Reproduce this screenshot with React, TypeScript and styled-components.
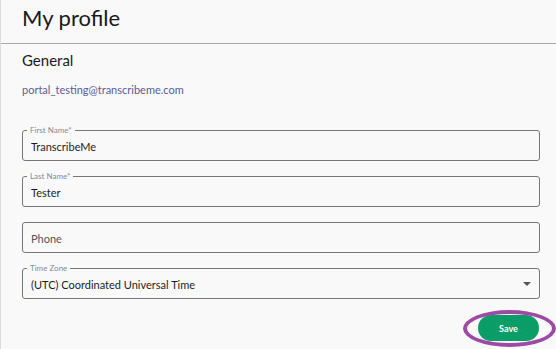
import React from "react";
import styled, { createGlobalStyle } from "styled-components";

const Global = createGlobalStyle`
  html, body { margin: 0; padding: 0; background: #f9f9f9; }
  body { font-family: Lato, "Noto Sans", sans-serif; color: #1d1d1d; }
  * { box-sizing: border-box; }
`;

const Page = styled.div`
  width: 556px;
  height: 349px;
  border-left: 1px solid #dcdcdc;
  background: #f9f9f9;
  overflow: hidden;
`;

const Header = styled.header`
  height: 44px;
  border-bottom: 1px solid #a9a9a9;
  padding: 4px 0 0 21px;
`;

const Title = styled.h1`
  margin: 0;
  font-size: 22px;
  font-weight: 400;
  line-height: normal;
  color: #1a1a1a;
`;

const Content = styled.section`
  padding: 7px 16px 0 21px;
  display: flex;
  flex-direction: column;
`;

const SectionTitle = styled.h2`
  margin: 0;
  font-size: 15px;
  font-weight: 400;
  line-height: normal;
  color: #1a1a1a;
`;

const Email = styled.div`
  margin-top: 15px;
  font-size: 11px;
  line-height: 12px;
  color: #5c5c93;
`;

const Fields = styled.div`
  margin-top: 34px;
  display: flex;
  flex-direction: column;
  gap: 15px;
`;

const Field = styled.div`
  position: relative;
  height: 31px;
  border: 1px solid #767676;
  border-radius: 3px;
  display: flex;
  align-items: center;
  padding: 0 8px;
`;

const FieldLabel = styled.span`
  position: absolute;
  top: -5px;
  left: 4px;
  padding: 0 3px;
  font-size: 8px;
  line-height: 8px;
  color: #8a8a8a;
  background: #f9f9f9;
`;

const TextInput = styled.input`
  flex: 1;
  border: none;
  outline: none;
  background: transparent;
  padding: 0;
  margin-top: 1px;
  font-family: Lato, "Noto Sans", sans-serif;
  font-size: 11px;
  color: #1d1d1d;
  &::placeholder { color: #555; opacity: 1; }
`;

const SelectValue = styled.span`
  flex: 1;
  font-size: 11px;
  margin-top: 1px;
  color: #1d1d1d;
`;

const Caret = styled.span`
  width: 0;
  height: 0;
  border-left: 4px solid transparent;
  border-right: 4px solid transparent;
  border-top: 4px solid #555;
`;

const Actions = styled.div`
  margin-top: 16px;
  display: flex;
  justify-content: flex-end;
`;

const ButtonWrap = styled.div`
  position: relative;
  margin-right: 1px;
`;

const SaveButton = styled.button`
  width: 61px;
  height: 26px;
  border: none;
  border-radius: 13px;
  background: #0a9d68;
  color: #ffffff;
  font-family: Lato, "Noto Sans", sans-serif;
  font-weight: 700;
  font-size: 9px;
  cursor: pointer;
`;

const Highlight = styled.span`
  position: absolute;
  left: -15px;
  top: -5px;
  width: 93px;
  height: 37px;
  border: 4px solid #9d4aa6;
  border-radius: 50%;
  pointer-events: none;
`;

export default function App() {
  return (
    <>
      <Global />
      <Page>
        <Header>
          <Title>My profile</Title>
        </Header>
        <Content>
          <SectionTitle>General</SectionTitle>
          <Email>portal_testing@transcribeme.com</Email>
          <Fields>
            <Field>
              <FieldLabel>First Name*</FieldLabel>
              <TextInput defaultValue="TranscribeMe" />
            </Field>
            <Field>
              <FieldLabel>Last Name*</FieldLabel>
              <TextInput defaultValue="Tester" />
            </Field>
            <Field>
              <TextInput placeholder="Phone" />
            </Field>
            <Field>
              <FieldLabel>Time Zone</FieldLabel>
              <SelectValue>(UTC) Coordinated Universal Time</SelectValue>
              <Caret />
            </Field>
          </Fields>
          <Actions>
            <ButtonWrap>
              <SaveButton>Save</SaveButton>
              <Highlight />
            </ButtonWrap>
          </Actions>
        </Content>
      </Page>
    </>
  );
}
